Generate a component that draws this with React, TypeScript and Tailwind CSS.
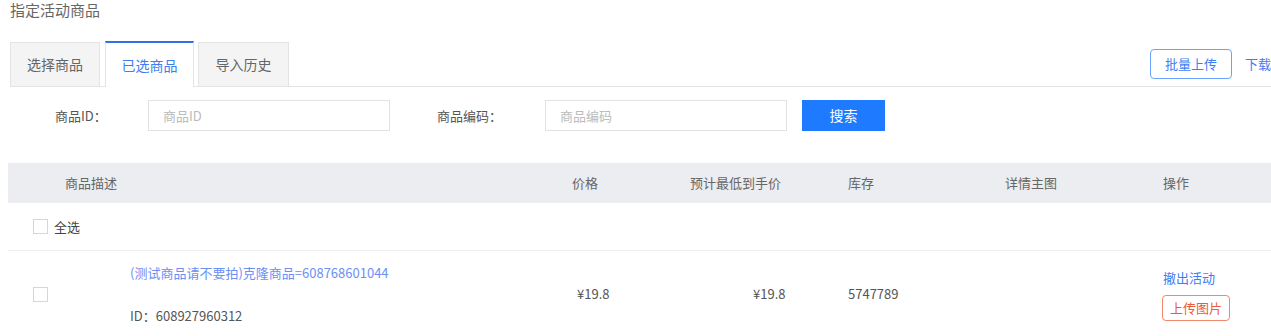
import React from "react";

const font = { fontFamily: '"Noto Sans CJK SC", "Noto Sans", sans-serif' };

export default function App() {
  return (
    <div
      className="relative w-[1271px] h-[336px] overflow-hidden bg-white text-[13px] text-[#666]"
      style={font}
    >
      <div className="pl-[10px] pt-[0px] text-[15px] leading-[19px] text-[#666]">指定活动商品</div>

      {/* tabs */}
      <div className="mt-[22px] ml-[10px] flex items-end border-b border-[#e4e4e4] h-[46px] w-[1300px]">
        <div className="w-[90px] h-[45px] mb-[-1px] flex items-center justify-center bg-[#f4f4f4] border border-[#e4e4e4] text-[14px] text-[#666]">
          选择商品
        </div>
        <div className="ml-[5px] w-[89px] h-[46px] mb-[-1px] flex items-center justify-center bg-white border-x border-[#e4e4e4] border-t-2 border-t-[#2f6fe8] text-[14px] text-[#3f7cf0]">
          已选商品
        </div>
        <div className="ml-[4px] w-[91px] h-[45px] mb-[-1px] flex items-center justify-center bg-[#f4f4f4] border border-[#e4e4e4] text-[14px] text-[#666]">
          导入历史
        </div>
        <div className="flex-1" />
        <div className="mb-[7px] flex items-center">
          <button className="w-[82px] h-[30px] rounded-[4px] border border-[#6aa3ff] text-[#3d7df5] text-[13px]">
            批量上传
          </button>
          <span className="ml-[13px] w-[65px] text-[13px] text-[#3d7df5] whitespace-nowrap">下载模板</span>
        </div>
      </div>

      {/* search */}
      <div className="mt-[13px] flex items-center h-[31px]">
        <span className="ml-[55px] w-[93px] text-[#555]">商品ID：</span>
        <div className="w-[242px] h-[31px] border border-[#e2e2e2] flex items-center pl-[14px] text-[#bbb]">
          商品ID
        </div>
        <span className="ml-[47px] w-[108px] text-[#555]">商品编码：</span>
        <div className="w-[242px] h-[31px] border border-[#e2e2e2] flex items-center pl-[14px] text-[#bbb]">
          商品编码
        </div>
        <button className="ml-[15px] w-[83px] h-[31px] bg-[#1e7bff] text-white text-[14px]">搜索</button>
      </div>

      {/* table */}
      <div className="ml-[8px] mt-[32px] w-[1300px]">
        <div className="flex items-center h-[40px] bg-[#ebedf0] text-[#666]">
          <div className="w-[564px] pl-[57px]">商品描述</div>
          <div className="w-[118px]">价格</div>
          <div className="w-[158px]">预计最低到手价</div>
          <div className="w-[157px]">库存</div>
          <div className="w-[158px]">详情主图</div>
          <div>操作</div>
        </div>
        <div className="flex items-center h-[48px] border-b border-[#eeeeee]">
          <span className="ml-[25px] w-[15px] h-[15px] border border-[#d6d6d6] bg-white" />
          <span className="ml-[6px] text-[#444]">全选</span>
        </div>
        <div className="flex h-[86px]">
          <div className="w-[564px] flex items-center">
            <span className="ml-[25px] w-[15px] h-[15px] border border-[#d6d6d6] bg-white" />
            <div className="ml-[82px] flex flex-col pt-[1px]">
              <span className="text-[#6c8ff5] leading-[18px]">(测试商品请不要拍)克隆商品=608768601044</span>
              <span className="mt-[25px] text-[#555] leading-[18px]">ID：608927960312</span>
            </div>
          </div>
          <div className="w-[118px] flex items-center pl-[5px] text-[#555]">¥19.8</div>
          <div className="w-[158px] flex items-center pl-[63px] text-[#555]">¥19.8</div>
          <div className="w-[157px] flex items-center text-[#555]">5747789</div>
          <div className="w-[158px]" />
          <div className="flex flex-col items-start pt-[18px]">
            <span className="text-[#3d7df5] leading-[18px]">撤出活动</span>
            <span className="mt-[8px] -ml-[1px] h-[26px] px-[7px] flex items-center rounded-[4px] border border-[#f2876a] text-[#ec5a3a]">
              上传图片
            </span>
          </div>
        </div>
      </div>
    </div>
  );
}
